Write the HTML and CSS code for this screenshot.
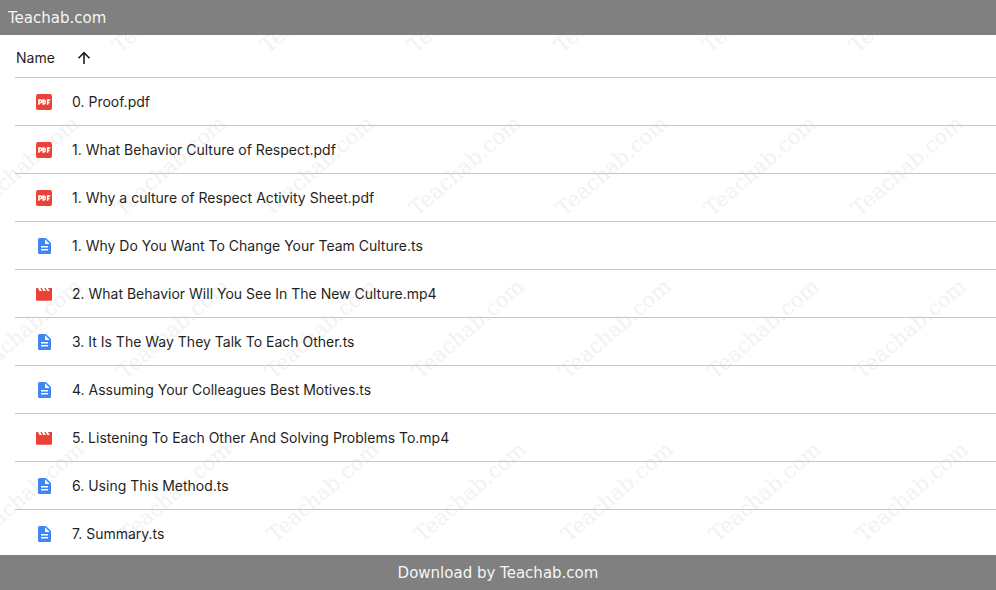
FILE: index.html
```html
<!DOCTYPE html>
<html lang="en">
  <head>
    <meta charset="utf-8">
    <title>Teachab.com</title>
    <meta name="viewport" content="width=device-width, initial-scale=1.0">
    <link rel="stylesheet" href="styles.css">
  </head>
  <body>
    <!-- shared icons -->
    <svg class="sprite" aria-hidden="true">
      <symbol id="icon-pdf" viewBox="0 0 16 16">
        <rect width="16" height="16" rx="2" fill="#ea4335"/>
        <path d="M2.9 10.8V6H4.3a1.3 1.3 0 0 1 0 2.8H2.9M7.1 6V10.1H7.8A1.3 1.3 0 0 0 9.1 8.8V7.3A1.3 1.3 0 0 0 7.8 6ZM11.6 10.8V6H14.2M11.6 8.4H13.6" fill="none" stroke="#fff" stroke-width="1.5"/>
      </symbol>
      <symbol id="icon-doc" viewBox="0 0 16 16">
        <path d="M3.5 0H10l5 5v9.5a1.5 1.5 0 0 1-1.5 1.5h-10A1.5 1.5 0 0 1 2 14.5v-13A1.5 1.5 0 0 1 3.5 0Z" fill="#4285f4"/>
        <path d="M9 1.2V6h4.8ZM5 8h7v1.4H5ZM5 11h7v1.4H5Z" fill="#fff"/>
      </symbol>
      <symbol id="icon-video" viewBox="0 0 16 16">
        <path d="M1 2H2L3.6 5H6L4.4 2H5.8L7.4 5H9.8L8.2 2H9.6L11.2 5H13.6L12 2H16V13.5a1.2 1.2 0 0 1-1.2 1.2H1.2A1.2 1.2 0 0 1 0 13.5V3A1 1 0 0 1 1 2Z" fill="#ea4335"/>
      </symbol>
    </svg>

    <header class="bar">Teachab.com</header>

    <main class="files">
      <svg class="watermark" aria-hidden="true">
        <defs>
          <text id="mark" transform="rotate(-41)">Teachab.com</text>
          <g id="mark-row">
            <use href="#mark" x="0"/>
            <use href="#mark" x="147"/>
            <use href="#mark" x="295"/>
            <use href="#mark" x="442"/>
            <use href="#mark" x="589"/>
            <use href="#mark" x="737"/>
            <use href="#mark" x="884"/>
          </g>
        </defs>
        <use href="#mark-row" x="-27" y="19"/>
        <use href="#mark-row" x="-25" y="182"/>
        <use href="#mark-row" x="-22" y="345"/>
        <use href="#mark-row" x="-20" y="508"/>
      </svg>

      <table class="file-table">
        <thead>
          <tr>
            <th colspan="2">
              <button class="sort" type="button">
                Name
                <svg class="arrow" viewBox="0 0 14 14" aria-hidden="true">
                  <path d="M7 13V2M1.5 7.2L7 1.7L12.5 7.2"/>
                </svg>
              </button>
            </th>
          </tr>
        </thead>
        <tbody>
          <tr>
            <td class="type"><svg class="icon"><use href="#icon-pdf"/></svg></td>
            <td>0. Proof.pdf</td>
          </tr>
          <tr>
            <td class="type"><svg class="icon"><use href="#icon-pdf"/></svg></td>
            <td>1. What Behavior Culture of Respect.pdf</td>
          </tr>
          <tr>
            <td class="type"><svg class="icon"><use href="#icon-pdf"/></svg></td>
            <td>1. Why a culture of Respect Activity Sheet.pdf</td>
          </tr>
          <tr>
            <td class="type"><svg class="icon"><use href="#icon-doc"/></svg></td>
            <td>1. Why Do You Want To Change Your Team Culture.ts</td>
          </tr>
          <tr>
            <td class="type"><svg class="icon"><use href="#icon-video"/></svg></td>
            <td>2. What Behavior Will You See In The New Culture.mp4</td>
          </tr>
          <tr>
            <td class="type"><svg class="icon"><use href="#icon-doc"/></svg></td>
            <td>3. It Is The Way They Talk To Each Other.ts</td>
          </tr>
          <tr>
            <td class="type"><svg class="icon"><use href="#icon-doc"/></svg></td>
            <td>4. Assuming Your Colleagues Best Motives.ts</td>
          </tr>
          <tr>
            <td class="type"><svg class="icon"><use href="#icon-video"/></svg></td>
            <td>5. Listening To Each Other And Solving Problems To.mp4</td>
          </tr>
          <tr>
            <td class="type"><svg class="icon"><use href="#icon-doc"/></svg></td>
            <td>6. Using This Method.ts</td>
          </tr>
          <tr>
            <td class="type"><svg class="icon"><use href="#icon-doc"/></svg></td>
            <td>7. Summary.ts</td>
          </tr>
        </tbody>
      </table>
    </main>

    <footer class="bar bar-bottom">Download by Teachab.com</footer>
  </body>
</html>
```
FILE: styles.css
```css
body{
  margin: 0;
  height: 100vh;
  display: flex;
  flex-direction: column;
  background-color: white;
  color: #1f1f1f;
  font-family: Inter, Roboto, sans-serif;
  font-size: 14px;
}

.sprite{
  position: absolute;
  width: 0;
  height: 0;
}

.bar{
  flex: none;
  padding: 1px 8px 0;
  line-height: 34px;
  background-color: #808080;
  color: #f5f5f5;
  font-family: "DejaVu Sans", sans-serif;
  font-size: 15px;
}
.bar-bottom{
  text-align: center;
}

.files{
  flex: 1;
  min-height: 0;
  position: relative;
  overflow: hidden;
  padding-left: 15px;
}

/* repeated text behind the list */
.watermark{
  position: absolute;
  top: 0;
  left: 0;
  width: 100%;
  height: 100%;
  z-index: -1;
  fill: #f2f2f2;
  font-family: "DejaVu Serif", serif;
  font-size: 21px;
}

.file-table{
  width: 100%;
  border-collapse: separate;
  border-spacing: 0;
}
.file-table th,
.file-table td{
  box-sizing: border-box;
  height: 48px;
  padding: 0;
  border-bottom: 1px solid #c7c7c7;
  text-align: left;
  font-weight: normal;
}
.file-table th{
  height: 43px;
}
.file-table .type{
  width: 57px;
  padding-left: 21px;
}

.icon{
  display: block;
  width: 16px;
  height: 16px;
}

.sort{
  display: flex;
  align-items: center;
  gap: 22px;
  padding: 3px 1px 0;
  border: none;
  background: none;
  color: inherit;
  font: inherit;
  cursor: pointer;
}
.arrow{
  width: 14px;
  height: 14px;
  fill: none;
  stroke: #1f1f1f;
  stroke-width: 1.6;
}
```
